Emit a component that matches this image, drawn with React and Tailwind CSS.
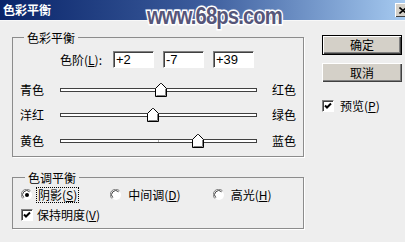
import React from "react";

const cjk = "font-['Noto_Sans_CJK_SC','Noto_Sans_CJK_SC',sans-serif]";

function Thumb() {
  return (
    <svg width="12" height="14" viewBox="0 0 12 14" className="block">
      <path d="M0.5 13.5 V5.5 L5.5 0.5 L6.5 0.5 L11.5 5.5 V13.5 Z" fill="#ffffff" stroke="#000000" strokeWidth="1" />
      <path d="M1.5 12.5 V5.9 L5.9 1.5" fill="none" stroke="#ffffff" strokeWidth="1" />
      <path d="M1.5 12.5 H10.5 V5.9" fill="none" stroke="#808080" strokeWidth="1" />
    </svg>
  );
}

function SliderRow({ left, right, value, hClass, tick }) {
  const pct = (value + 100) / 200;
  const x = Math.round(197 * pct) - 6;
  return (
    <div className={`flex items-center ${hClass}`}>
      <span className="ml-[7px] w-[24px] text-[12px] leading-[14px] whitespace-nowrap">{left}</span>
      <div className="relative ml-[16px] h-[4px] w-[197px] border-t border-l border-[#404040] border-b border-r border-b-[#404040] border-r-[#404040] bg-white">
        {tick && <div className="absolute left-[97px] top-0 h-[2px] w-[1px] bg-[#b0b0b0]" />}
        <div className="absolute top-[-6px]" style={{ left: x }}>
          <Thumb />
        </div>
      </div>
      <span className="ml-[15px] w-[24px] text-[12px] leading-[14px] whitespace-nowrap">{right}</span>
    </div>
  );
}

function NumBox({ v }) {
  return (
    <div className="flex h-[17px] w-[41px] items-center border border-t-[#808080] border-l-[#808080] border-r-white border-b-white bg-white pl-[2px] shadow-[inset_1px_1px_0_#404040] font-['Liberation_Sans',sans-serif] text-[13px] leading-[15px] text-black">
      {v}
    </div>
  );
}

function Radio({ checked }) {
  return (
    <svg width="12" height="12" viewBox="0 0 12 12" className="block shrink-0">
      <circle cx="6" cy="6" r="5" fill="#ffffff" />
      <path d="M1.8 9.5 A5 5 0 0 1 9.5 1.8" fill="none" stroke="#808080" strokeWidth="1" />
      <path d="M2.8 8.6 A4 4 0 0 1 8.6 2.8" fill="none" stroke="#404040" strokeWidth="1" />
      {checked && <circle cx="6" cy="6" r="2" fill="#000000" />}
    </svg>
  );
}

function Check() {
  return (
    <div className="relative h-[12px] w-[12px] shrink-0 border border-t-[#808080] border-l-[#808080] border-r-white border-b-white bg-white shadow-[inset_1px_1px_0_#404040]">
      <svg width="10" height="10" viewBox="0 0 10 10" className="absolute left-0 top-0">
        <path d="M2 4.5 L4 6.5 L8 2.5" fill="none" stroke="#000" strokeWidth="2" />
      </svg>
    </div>
  );
}

export default function App() {
  return (
    <div className={`relative h-[242px] w-[405px] overflow-hidden bg-[#eeeeee] text-black ${cjk}`}>
      {/* title bar */}
      <div className="flex h-[20px] items-center justify-between bg-gradient-to-r from-[#0a246a] via-[#3c5c9c] to-[#a6caf0]">
        <span className="ml-[3px] text-[12px] font-bold leading-[14px] text-white">色彩平衡</span>
        <div className="mr-[-6px] flex h-[14px] w-[16px] items-center justify-center bg-[#d4d0c8] shadow-[inset_1px_1px_0_#fff,inset_-1px_-1px_0_#404040]">
          <svg width="8" height="7" viewBox="0 0 8 7" className="block">
            <path d="M0.5 0.5 L7.5 6.5 M7.5 0.5 L0.5 6.5" stroke="#000" strokeWidth="1.6" fill="none" />
          </svg>
        </div>
      </div>
      <div className="h-[1px] bg-[#f8f8f8]" />

      {/* body */}
      <div className="flex">
        <div className="ml-[12px] w-[292px]">
          <fieldset className="mt-[10px] h-[126px] border border-[#8c8c8c] shadow-[1px_1px_0_#ffffff]">
            <legend className="ml-[11px] px-[3px] text-[12px] leading-[13px]">色彩平衡</legend>
            <div className="mt-[7px] flex items-center">
              <span className="ml-[47px] w-[53px] whitespace-nowrap text-[12px] leading-[14px]">
                色阶(<u>L</u>):
              </span>
              <NumBox v="+2" />
              <div className="ml-[9px]">
                <NumBox v="-7" />
              </div>
              <div className="ml-[9px]">
                <NumBox v="+39" />
              </div>
            </div>
            <div className="mt-[10px]">
              <SliderRow left="青色" right="红色" value={2} hClass="h-[24px]" />
              <SliderRow left="洋红" right="绿色" value={-7} hClass="h-[26px]" />
              <SliderRow left="黄色" right="蓝色" value={39} hClass="h-[26px]" tick />
            </div>
          </fieldset>

          <fieldset className="mt-[14px] h-[58px] border border-[#8c8c8c] shadow-[1px_1px_0_#ffffff]">
            <legend className="ml-[12px] px-[3px] text-[12px] leading-[13px]">色调平衡</legend>
            <div className="mt-[3px] flex h-[16px] items-center text-[12px] leading-[14px]">
              <div className="ml-[8px]">
                <Radio checked />
              </div>
              <span className="ml-[3px] whitespace-nowrap border border-dotted border-black px-[1px]">
                阴影(<u>S</u>)
              </span>
              <div className="ml-[31px]">
                <Radio />
              </div>
              <span className="ml-[6px] whitespace-nowrap">
                中间调(<u>D</u>)
              </span>
              <div className="ml-[32px]">
                <Radio />
              </div>
              <span className="ml-[6px] whitespace-nowrap">
                高光(<u>H</u>)
              </span>
            </div>
            <div className="mt-[4px] flex h-[16px] items-center text-[12px] leading-[14px]">
              <div className="ml-[8px]">
                <Check />
              </div>
              <span className="ml-[4px] whitespace-nowrap">
                保持明度(<u>V</u>)
              </span>
            </div>
          </fieldset>
        </div>

        <div className="ml-[18px] flex w-[80px] flex-col">
          <div className="mt-[14px] flex h-[20px] items-center justify-center border border-black bg-[#d4d0c8] text-[12px] leading-[14px] shadow-[inset_1px_1px_0_#ffffff,inset_-1px_-1px_0_#404040,inset_-2px_-2px_0_#808080]">
            确定
          </div>
          <div className="mt-[8px] flex h-[19px] items-center justify-center bg-[#d4d0c8] text-[12px] leading-[14px] shadow-[inset_1px_1px_0_#ffffff,inset_-1px_-1px_0_#404040,inset_-2px_-2px_0_#808080]">
            取消
          </div>
          <div className="mt-[17px] flex items-center text-[12px] leading-[14px]">
            <Check />
            <span className="ml-[6px] whitespace-nowrap">
              预览(<u>P</u>)
            </span>
          </div>
        </div>
      </div>

      {/* watermark */}
      <div className="absolute left-[147px] top-[3px] origin-left scale-x-[0.88] font-['Liberation_Sans',sans-serif] text-[23px] font-bold leading-[26px] tracking-[-1px] text-[#56567a] [paint-order:stroke_fill] [-webkit-text-stroke:3px_#ffffff] [text-shadow:0_0_3px_#ffffff]">
        www.68ps.com
      </div>
    </div>
  );
}
